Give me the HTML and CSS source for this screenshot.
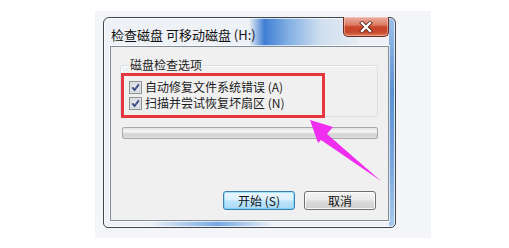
FILE: index.html
```html
<!DOCTYPE html>
<html lang="zh-CN">
<head>
<meta charset="utf-8">
<title>检查磁盘</title>
<link rel="stylesheet" href="styles.css">
</head>
<body>
<div class="page">
  <div class="backdrop">
    <div class="window">
      <div class="titlebar">
        <span class="title">检查磁盘 可移动磁盘 (H:)</span>
        <span class="close">
          <svg width="14" height="12" viewBox="0 0 14 12">
            <path d="M3 2 L11 10 M11 2 L3 10" stroke="#5a1d12" stroke-width="4" stroke-linecap="square"/>
            <path d="M3 2 L11 10 M11 2 L3 10" stroke="#ffffff" stroke-width="2.4" stroke-linecap="square"/>
          </svg>
        </span>
      </div>
      <div class="client">
        <fieldset class="group">
          <legend class="legend">磁盘检查选项</legend>
          <label class="row">
            <span class="check"><svg width="13" height="13" viewBox="0 0 13 13"><rect x="0.5" y="0.5" width="12" height="12" fill="#f4f4f4" stroke="#8e8f8f"/><rect x="2" y="2" width="9" height="9" fill="#e2e4e8" stroke="#b9bdc4" stroke-width="0.6"/><path d="M3.3 6.4 L5.6 9 L9.8 3.4" fill="none" stroke="#3b4f88" stroke-width="1.9"/></svg></span>
            <span class="label">自动修复文件系统错误 (A)</span>
          </label>
          <label class="row">
            <span class="check"><svg width="13" height="13" viewBox="0 0 13 13"><rect x="0.5" y="0.5" width="12" height="12" fill="#f4f4f4" stroke="#8e8f8f"/><rect x="2" y="2" width="9" height="9" fill="#e2e4e8" stroke="#b9bdc4" stroke-width="0.6"/><path d="M3.3 6.4 L5.6 9 L9.8 3.4" fill="none" stroke="#3b4f88" stroke-width="1.9"/></svg></span>
            <span class="label">扫描并尝试恢复坏扇区 (N)</span>
          </label>
        </fieldset>
        <div class="progress"></div>
        <div class="buttons">
          <span class="btn default">开始 (S)</span>
          <span class="btn">取消</span>
        </div>
      </div>
    </div>
  </div>
  <div class="highlight"></div>
  <svg class="arrow" width="509" height="248" viewBox="0 0 509 248">
    <polygon points="310,120 333,127 327,134 381,181 321,140 318,143" fill="#f02ef0"/>
  </svg>
</div>
</body>
</html>
```

FILE: styles.css
```css
html, body {
  margin: 0;
  padding: 0;
  background: #ffffff;
}

.page {
  position: relative;
  width: 509px;
  height: 248px;
  padding: 11px 0 0 95px;
  box-sizing: border-box;
  font-family: "Noto Sans CJK SC", "Noto Sans", sans-serif;
  color: #1b1b1b;
}

.backdrop {
  width: 336px;
  height: 227px;
  box-sizing: border-box;
  padding: 6px 0 0 8px;
  background: #f3f5f8;
}

.window {
  width: 293px;
  height: 211px;
  box-sizing: border-box;
  border: 1px solid #41464c;
  border-radius: 6px 6px 5px 5px;
  padding: 0 6px 6px 6px;
  display: flex;
  flex-direction: column;
  box-shadow: inset 0 0 0 1px rgba(255, 255, 255, 0.75);
  background:
    linear-gradient(180deg, #9cc0ea 0%, #5a92d4 35%, #76a6de 70%, #a9c9ee 100%) right top / 6px 100% no-repeat,
    linear-gradient(90deg, rgba(120, 170, 230, 0) 0%, rgba(110, 165, 228, 0.95) 55%, rgba(120, 170, 230, 0) 100%) 45px 100% / 125px 6px no-repeat,
    linear-gradient(90deg, rgba(70, 130, 210, 0) 0%, rgba(55, 120, 210, 0.95) 14%, rgba(90, 150, 220, 0.75) 35%, rgba(170, 200, 232, 0.45) 65%, rgba(215, 225, 238, 0.3) 100%) 145px 0 / 110px 28px no-repeat,
    #eef1f5;
}

.titlebar {
  height: 28px;
  display: flex;
  align-items: flex-start;
}

.title {
  margin: 9px 0 0 1px;
  font-size: 13px;
  line-height: 16px;
  white-space: nowrap;
  color: #111111;
}

.close {
  margin: -1px 0 0 auto;
  width: 46px;
  height: 20px;
  box-sizing: border-box;
  border: 1px solid #6e2b20;
  border-top: none;
  border-radius: 0 0 5px 5px;
  display: flex;
  align-items: center;
  justify-content: center;
  background: linear-gradient(180deg, #eab0a2 0%, #dc7a63 42%, #c8452a 52%, #c9492c 80%, #dc7a5c 100%);
  box-shadow: inset 0 0 0 1px rgba(255, 220, 210, 0.45);
}

.client {
  flex: 1;
  border: 1px solid #838c97;
  background: #f0f0f0;
  display: flex;
  flex-direction: column;
  box-shadow: 0 0 0 1px rgba(255, 255, 255, 0.7);
}

.group {
  margin: 11px 10px 0 9px;
  padding: 7px 6px 5px 8px;
  border: 1px solid #d5dfe5;
  border-radius: 3px;
  box-shadow: inset 1px 1px 0 #ffffff;
}

.legend {
  padding: 0 1px;
  font-size: 12px;
  line-height: 14px;
  color: #1b1b1b;
}

.row {
  display: flex;
  align-items: center;
  height: 16px;
}

.check {
  width: 13px;
  height: 13px;
  display: flex;
}

.label {
  margin-left: 3px;
  font-size: 12px;
  line-height: 16px;
  white-space: nowrap;
}

.progress {
  margin: 10px 0 0 11px;
  width: 256px;
  height: 12px;
  box-sizing: border-box;
  border: 1px solid #a9a9a9;
  border-radius: 2px;
  background: linear-gradient(180deg, #e4e4e4 0%, #f6f6f6 35%, #dadada 55%, #d2d2d2 80%, #e2e2e2 100%);
}

.buttons {
  margin-top: auto;
  margin-bottom: 10px;
  padding-right: 12px;
  display: flex;
  justify-content: flex-end;
  gap: 9px;
}

.btn {
  width: 72px;
  height: 19px;
  box-sizing: border-box;
  border: 1px solid #707070;
  border-radius: 3px;
  display: flex;
  align-items: center;
  justify-content: center;
  font-size: 12px;
  line-height: 14px;
  color: #111111;
  background: linear-gradient(180deg, #f3f3f3 0%, #ebebeb 48%, #dddddd 52%, #cfcfcf 100%);
  box-shadow: inset 0 0 0 1px rgba(255, 255, 255, 0.8);
}

.btn.default {
  border-color: #3c7fb1;
  background: linear-gradient(180deg, #eaf6fd 0%, #d9f0fc 48%, #bee6fd 52%, #a7d9f5 100%);
  box-shadow: inset 0 0 0 1px rgba(72, 204, 247, 0.45);
}

.highlight {
  position: absolute;
  left: 121px;
  top: 73px;
  width: 204px;
  height: 45px;
  box-sizing: border-box;
  border: 3px solid #e6363e;
}

.arrow {
  position: absolute;
  left: 0;
  top: 0;
}
```
